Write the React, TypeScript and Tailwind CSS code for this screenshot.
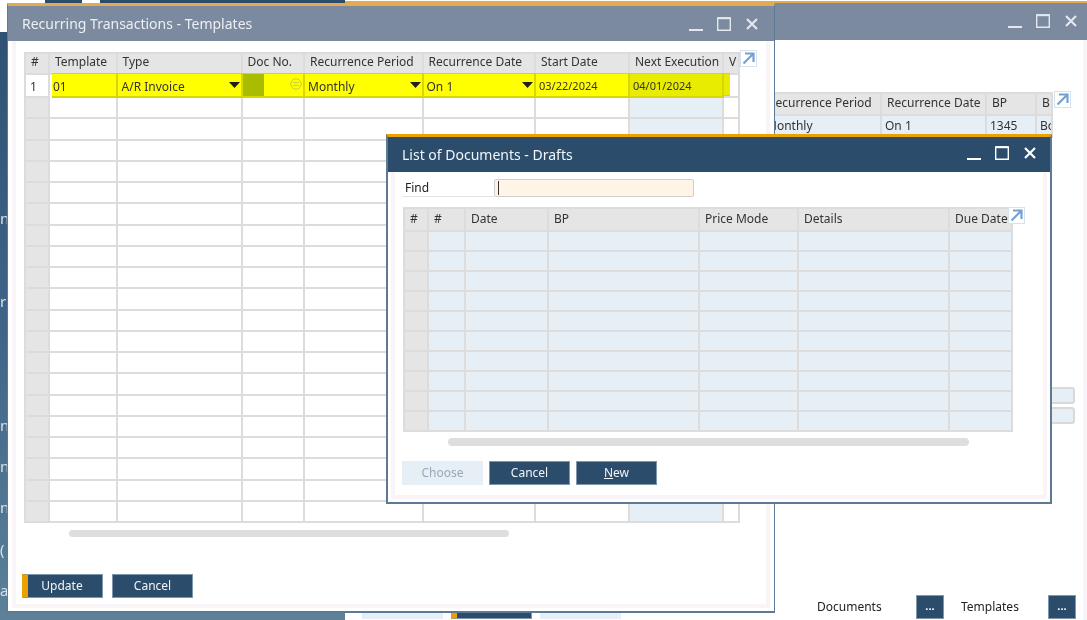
import type { ReactNode } from 'react'
import { twMerge } from 'tailwind-merge'

const font = 'font-["Noto_Sans","Open_Sans",sans-serif]'

function WinControls({ color, className = '' }: { color: string; className?: string }) {
  return (
    <div className={`flex items-center gap-[14px] ${className}`}>
      <svg width="14" height="14" viewBox="0 0 14 14" fill="none" stroke={color} strokeWidth="2">
        <path d="M0 13h14" />
      </svg>
      <svg width="14" height="14" viewBox="0 0 14 14" fill="none" stroke={color} strokeWidth="1.4">
        <path d="M.7.9h12.6v12.4H.7z" />
        <path d="M.7 1.2h12.6" strokeWidth="2" />
      </svg>
      <svg width="14" height="14" viewBox="0 0 14 14" fill="none" stroke={color} strokeWidth="2.2">
        <path d="M2 2l10 10M12 2L2 12" />
      </svg>
    </div>
  )
}

function ExpandArrow({ className }: { className: string }) {
  return (
    <svg className={`absolute ${className}`} width="17" height="17" viewBox="0 0 17 17" fill="#fff">
      <rect x=".5" y=".5" width="16" height="16" stroke="#d5e3f1" />
      <path d="M5 3.5h8.5V12M13 4L3.5 13.5" fill="none" stroke="#74a2d0" strokeWidth="2.2" />
    </svg>
  )
}

function Btn({ children, accent, disabled, className = '' }: { children?: ReactNode; accent?: boolean; disabled?: boolean; className?: string }) {
  return (
    <div
      className={`flex h-[24px] w-[81px] shrink-0 items-center justify-center text-[12px] ${
        disabled ? 'bg-[#e6eef6] text-[#9ca7b6]' : 'border border-[#7f97ae] bg-[#2b4d6b] text-[#f2f5f8]'
      } ${accent ? 'border-l-[6px] border-l-[#e9a200] pr-[6px]' : ''} ${className}`}
    >
      {children}
    </div>
  )
}

function MoreBtn() {
  return (
    <div className="flex h-[24px] w-[28px] items-center justify-center border border-[#7f97ae] bg-[#2b4d6b] pb-[4px] text-[11px] font-bold leading-none text-white">...</div>
  )
}

function TitleBar({ title, bar, text, controls, height, pad }: { title: string; bar: string; text: string; controls: ReactNode; height: string; pad: string }) {
  return (
    <div className={`flex shrink-0 items-center justify-between pl-[14px] ${pad} ${bar} ${height}`}>
      <span className={`text-[14px] ${text}`}>{title}</span>
      {controls}
    </div>
  )
}

function Cell({ children, className = '' }: { children?: ReactNode; className?: string }) {
  return (
    <div className={twMerge('flex min-w-0 items-center overflow-hidden whitespace-nowrap border-b-2 border-r-2 border-[#dcdcdc] pl-[5px] text-[12px] text-[#333]', className)}>
      {children}
    </div>
  )
}

const leftCols = 'grid grid-cols-[26px_67.5px_125px_62.5px_118.5px_112.5px_94px_94px_16px]'
const leftHeader = ['#', 'Template', 'Type', 'Doc No.', 'Recurrence Period', 'Recurrence Date', 'Start Date', 'Next Execution', 'V']

const dialogCols = 'grid grid-cols-[26px_37px_83px_151px_99px_151px_63px]'
const dialogHeader = ['#', '#', 'Date', 'BP', 'Price Mode', 'Details', 'Due Date']

const backCols = 'grid grid-cols-[119px_105px_50px_16px]'
const backHeader = ['Recurrence Period', 'Recurrence Date', 'BP', 'B']
const backRow = ['Monthly', 'On 1', '1345', 'Bo']

const sideLetters = ['n', '', 'r', '', '', 'n', 'n', 'n', '(', 'a']

const yellow = '-mt-[2px] h-[25px] border-t border-[#d8d800] bg-[#ffff00] pl-[3px] pt-[3px]'

function Caret() {
  return (
    <svg className="ml-auto mr-px -mt-[4px] shrink-0" width="11" height="6" viewBox="0 0 11 6">
      <path d="M0 0h11L5.5 6z" fill="#1f1f1f" />
    </svg>
  )
}

function TemplatesWindow() {
  return (
    <div className="absolute left-[7px] top-[3px] flex h-[610px] w-[768px] flex-col border-x border-b-2 border-[#5c7a96] border-t-[3px] border-t-[#e3ab4f] bg-white">
      <TitleBar
        title="Recurring Transactions - Templates"
        bar="bg-[#7b8a9f]"
        text="text-[#eceff3]"
        controls={<WinControls color="#e4e8ee" />}
        height="h-[35px]"
        pad="pr-[15px]"
      />
      <div className="flex flex-1 flex-col px-[4px] pb-[3px]">
        <div className="relative flex flex-1 flex-col border-x-4 border-b-4 border-[#f8f4f8] px-[8px] pt-[11px]">
          <div className={`${leftCols} h-[23px] w-[716px] bg-[#e5e5e5]`}>
            {leftHeader.map((h, i) => (
              <Cell key={i} className="border-t-2 pb-[3px] first:border-l-2">{h}</Cell>
            ))}
          </div>
          <div className={`${leftCols} h-[23px] w-[716px]`}>
            <Cell className="border-l-2 pl-[4px] pt-[3px]">1</Cell>
            <Cell className={`${yellow} ml-[2px] pl-px`}>01</Cell>
            <Cell className={`${yellow} pl-[4px]`}>A/R Invoice<Caret /></Cell>
            <Cell className={`${yellow} pl-0 pt-0`}>
              <div className="h-full w-[21px] bg-[#a9bd00]" />
              <svg className="ml-auto mr-px -mt-[3px]" width="12" height="12" viewBox="0 0 12 12" fill="none" stroke="#c4cf3a">
                <circle cx="6" cy="6" r="5.2" />
                <path d="M3 4.6h6M3 7.4h6" />
              </svg>
            </Cell>
            <Cell className={yellow}>Monthly<Caret /></Cell>
            <Cell className={yellow}>On 1<Caret /></Cell>
            <Cell className={`${yellow} text-[11px]`}>03/22/2024</Cell>
            <Cell className={`${yellow} bg-[#e8ec00] text-[11px]`}>04/01/2024</Cell>
            <Cell className="-mt-[2px] h-[25px] items-stretch pl-0">
              <div className="w-[6px] border-y border-[#d8d800] bg-[#e8ec00]" />
            </Cell>
          </div>
          {Array.from({ length: 20 }).map((_, r) => (
            <div key={r} className={`${leftCols} h-[21.25px] w-[716px]`}>
              {leftHeader.map((_, c) => (
                <Cell
                  key={c}
                  className={c === 0 ? 'border-l-2 bg-[#e5e5e5]' : c === 7 ? 'bg-[#e6eef6]' : 'bg-white'}
                />
              ))}
            </div>
          ))}
          <div className="ml-[45px] mt-[7px] h-[7px] w-[440px] rounded-full bg-[#dedede]" />
          <div className="-ml-[2px] mb-[6px] mt-auto flex gap-[9px]">
            <Btn accent>Update</Btn>
            <Btn>Cancel</Btn>
          </div>
          <ExpandArrow className="left-[724px] top-[9px]" />
        </div>
      </div>
    </div>
  )
}

function DraftsWindow() {
  return (
    <div className="absolute left-[386px] top-[134px] flex h-[370px] w-[666px] flex-col border-x-2 border-b-2 border-[#5c7a96] border-t-[3px] border-t-[#e9a200] bg-white">
      <TitleBar
        title="List of Documents - Drafts"
        bar="bg-[#2b4d6b]"
        text="text-[#f2f5f8]"
        controls={<WinControls color="#ffffff" className="-mt-[4px]" />}
        height="h-[35px]"
        pad="pr-[13px]"
      />
      <div className="flex flex-1 flex-col px-[3px] pb-[3px]">
        <div className="relative flex flex-1 flex-col border-x-4 border-b-4 border-[#f8f4f8] px-[8px] pt-[7px]">
          <div className="-ml-px flex h-[18px] items-stretch">
            <div className="flex w-[92px] items-center border-b border-[#e4e4e4] pl-[3px] text-[12px] text-[#222]">Find</div>
            <div className="flex w-[200px] items-center rounded-[2px] border border-[#cfcfcf] bg-[#fef5e7] pl-[3px]">
              <div className="h-[14px] w-px bg-[#333]" />
            </div>
          </div>
          <div className={`${dialogCols} mt-[10px] h-[25px] w-[610px] bg-[#e5e5e5]`}>
            {dialogHeader.map((h, i) => (
              <Cell key={i} className="border-t-2 pb-[2px] first:border-l-2">{h}</Cell>
            ))}
          </div>
          {Array.from({ length: 10 }).map((_, r) => (
            <div key={r} className={`${dialogCols} h-[20px] w-[610px]`}>
              {dialogHeader.map((_, c) => (
                <Cell key={c} className={c === 0 ? 'border-l-2 bg-[#e5e5e5]' : 'bg-[#e6eef6]'} />
              ))}
            </div>
          ))}
          <div className="ml-[45px] mt-[6px] h-[8px] w-[521px] rounded-full bg-[#dedede]" />
          <div className="-ml-px mt-[15px] flex gap-[6px]">
            <Btn disabled>Choose</Btn>
            <Btn>Cancel</Btn>
            <Btn><span><span className="underline">N</span>ew</span></Btn>
          </div>
          <ExpandArrow className="left-[613px] top-[35px]" />
        </div>
      </div>
    </div>
  )
}

function BackWindow() {
  return (
    <div className="absolute left-[345px] top-[1px] flex h-[619px] w-[742px] flex-col border-t-2 border-[#e3ab4f] bg-white">
      <TitleBar
        title=""
        bar="bg-[#7b8a9f]"
        text="text-[#eceff3]"
        controls={<WinControls color="#e4e8ee" className="-mt-[2px]" />}
        height="h-[37px]"
        pad="pr-[9px]"
      />
      <div className="relative flex flex-1 flex-col border-r-4 border-[#f8f4f8] pt-[52px]">
        <div className="flex justify-end pr-[30px]">
          <div>
            <div className={`${backCols} h-[24px] bg-[#e5e5e5]`}>
              {backHeader.map((h, i) => (
                <Cell key={i} className="border-t-2 pb-[2px]">{h}</Cell>
              ))}
            </div>
            <div className={`${backCols} h-[22px] bg-[#e6eef6]`}>
              {backRow.map((v, i) => (
                <Cell key={i} className="pl-[3px]">{v}</Cell>
              ))}
            </div>
          </div>
        </div>
        <div className="ml-auto mr-[8px] mt-[249px] flex w-[30px] flex-col gap-[3px]">
          <div className="h-[17px] rounded-r-[3px] border-2 border-[#d9d9d9] bg-[#e6eef6]" />
          <div className="h-[17px] rounded-r-[3px] border-2 border-[#d9d9d9] bg-[#e6eef6]" />
        </div>
        <div className="mt-auto flex items-center pb-px pl-[17px] pr-[7px]">
          <Btn disabled />
          <Btn accent className="ml-[8px]" />
          <Btn disabled className="ml-[8px]" />
          <span className="ml-[196px] w-[99px] text-[12px] text-[#222]">Documents</span>
          <MoreBtn />
          <span className="ml-[17px] w-[87px] text-[12px] text-[#222]">Templates</span>
          <MoreBtn />
        </div>
      </div>
    </div>
  )
}

export default function App() {
  return (
    <div className={`relative h-[620px] w-[1087px] overflow-hidden bg-white blur-[0.3px] ${font}`}>
      {/* strip of the main menu above the windows */}
      <div className="flex h-[3px] w-[345px]">
        <div className="w-[45px] bg-white" />
        <div className="w-[37px] bg-[#2b4d6b]" />
        <div className="w-[18px] bg-white" />
        <div className="flex-1 bg-[#2b4d6b]" />
      </div>
      {/* side panel, only its right edge shows past the window */}
      <div className="mt-[29px] flex h-[588px] w-[345px] flex-col items-start bg-gradient-to-b from-[#2f5273] via-[#3f6488] to-[#5d8198] pt-[166px]">
        {sideLetters.map((l, i) => (
          <div key={i} className="flex h-[41.3px] shrink-0 items-center text-[15px] leading-none text-[#d8e0e8]">{l}</div>
        ))}
      </div>
      <BackWindow />
      <TemplatesWindow />
      <DraftsWindow />
      <ExpandArrow className="left-[1054px] top-[91px]" />
    </div>
  )
}
